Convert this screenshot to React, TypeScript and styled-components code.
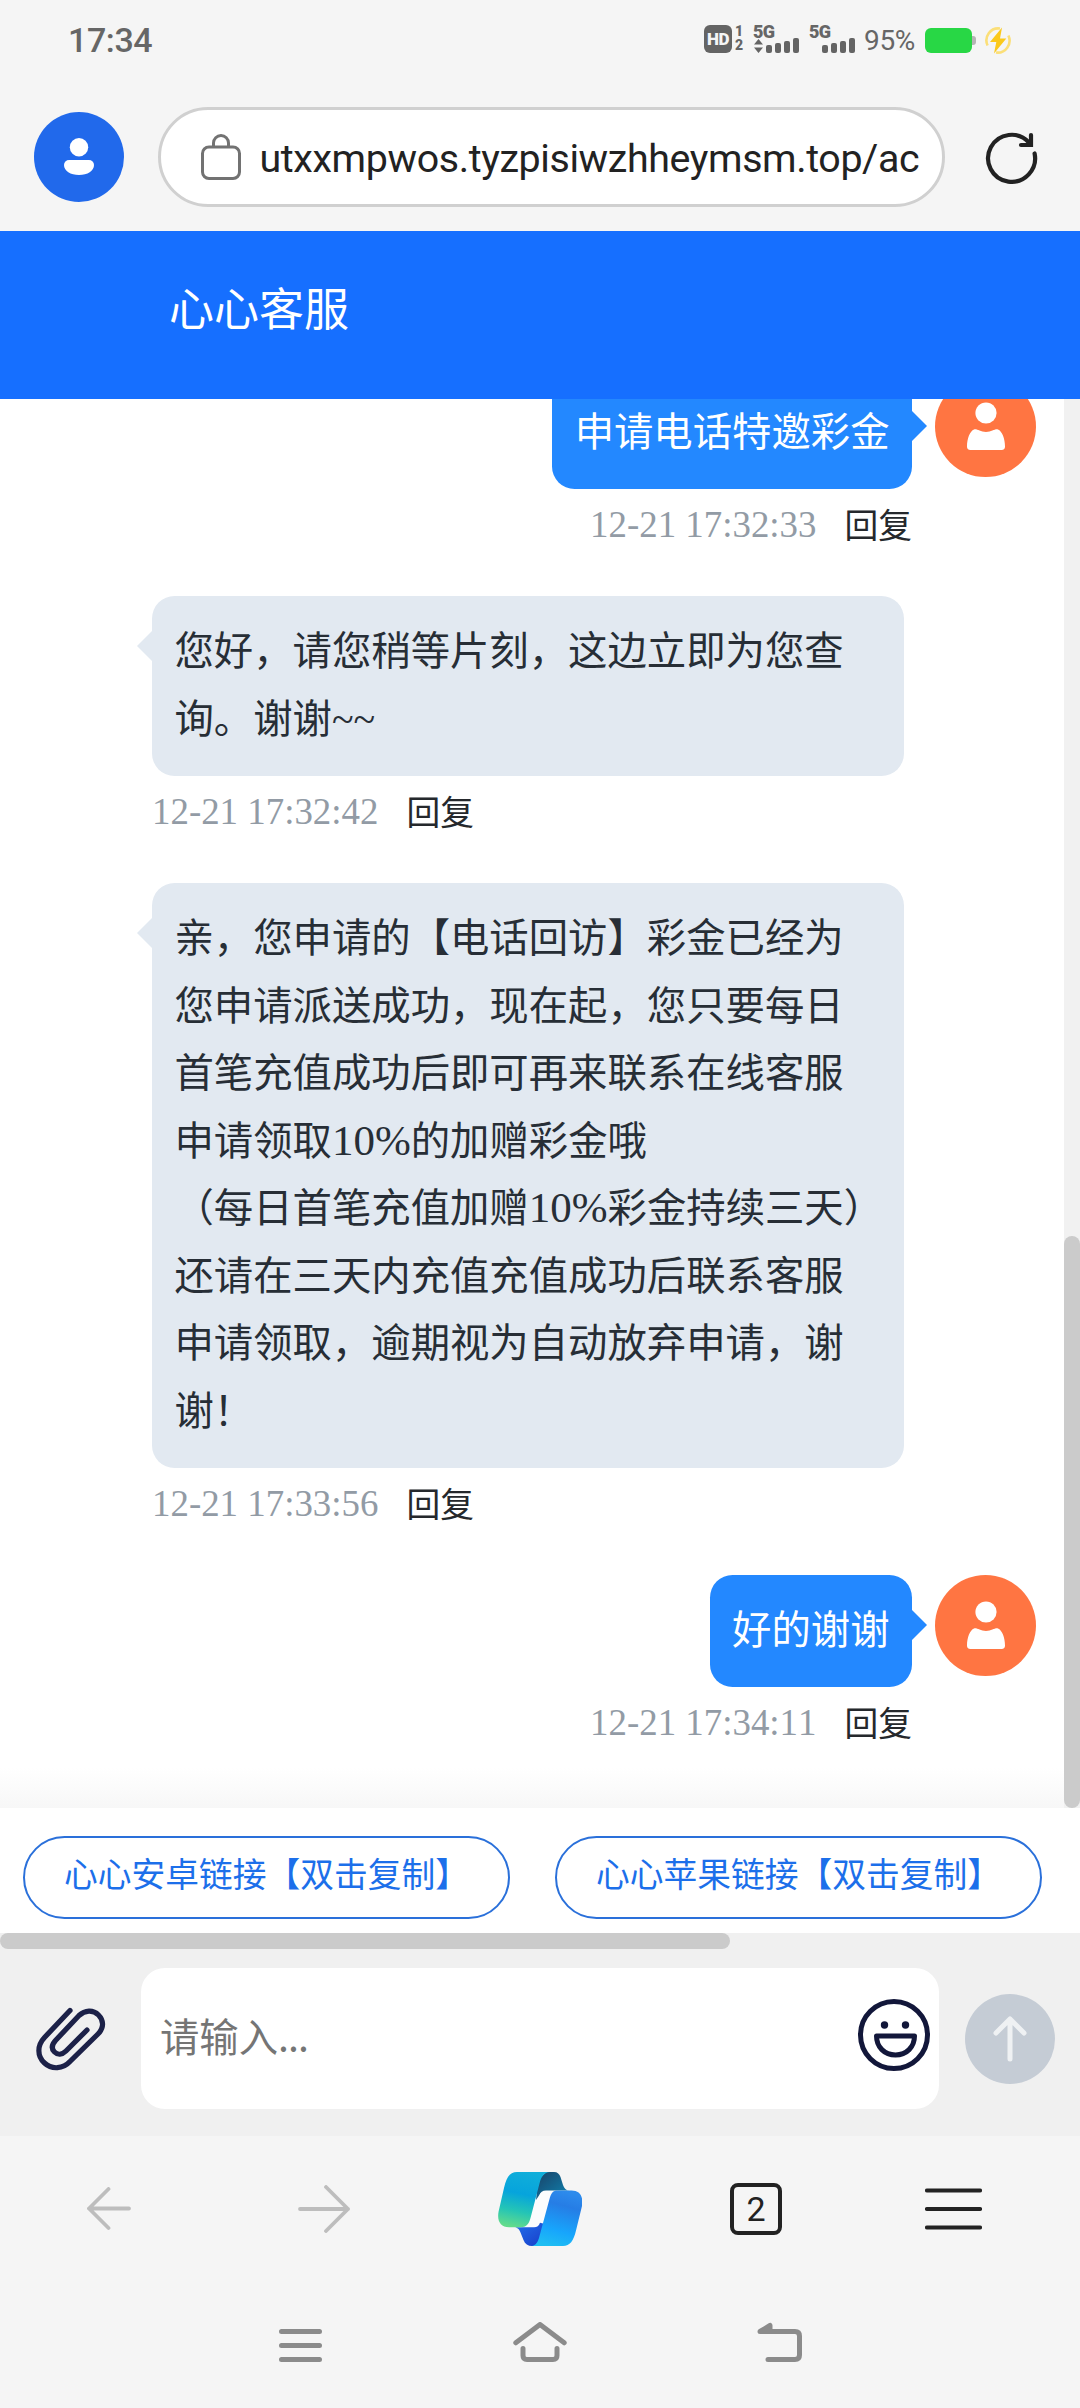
import React from "react";
import styled, { createGlobalStyle, css } from "styled-components";

const CJK = `"Noto Sans CJK SC", "Noto Sans", sans-serif`;
const SERIF = `"Liberation Serif", "Noto Sans CJK SC", serif`;

const GlobalStyle = createGlobalStyle`
  *, *::before, *::after { box-sizing: border-box; }
  body { margin: 0; background: #f5f5f5; }
  svg { display: block; flex: none; }
`;

const Screen = styled.div`
  display: flex;
  flex-direction: column;
  width: 1080px;
  height: 2408px;
  overflow: hidden;
  background: #f5f5f5;
  font-family: ${CJK};
`;

/* ---------- status bar ---------- */

const StatusBar = styled.header`
  display: flex;
  justify-content: space-between;
  height: 80px;
  padding: 25px 68px 0 68px;
  font-family: Roboto, sans-serif;
  color: #666;
`;

const Clock = styled.time`
  font-size: 34px;
  line-height: 31px;
  font-weight: 500;
  letter-spacing: -0.4px;
`;

const StatusIcons = styled.div`
  display: flex;
  height: 28px;
`;

const HdBadge = styled.div`
  width: 28px;
  height: 28px;
  border-radius: 6px;
  background: #646464;
  color: #f5f5f5;
  font-size: 17px;
  font-weight: 900;
  line-height: 29px;
  text-align: center;
  letter-spacing: -0.5px;
`;

const SimNumbers = styled.div`
  display: flex;
  flex-direction: column;
  width: 12px;
  margin-right: 9px;
  padding-left: 3px;
  font-size: 14px;
  font-weight: 900;
`;

const SimNumber = styled.span`
  height: 15px;
  line-height: 13px;
`;

const Signal = styled.div`
  display: flex;
  flex-direction: column;
  width: 46px;
  margin-right: 10px;
`;

const SignalLabel = styled.span`
  height: 13px;
  font-size: 18px;
  line-height: 14px;
  font-weight: 900;
  letter-spacing: -0.8px;
`;

const SignalBottom = styled.div`
  display: flex;
  justify-content: space-between;
  align-items: flex-end;
  height: 15px;
  padding-left: 1px;
`;

const Bars = styled.div`
  display: flex;
  align-items: flex-end;
  gap: 3px;
  margin-left: auto;
`;

const Bar = styled.i<{ $h: number }>`
  width: 6px;
  height: ${(p) => p.$h}px;
  border-radius: 2px;
  background: #646464;
`;

const Percent = styled.span`
  width: 61px;
  margin-left: -1px;
  font-size: 28px;
  line-height: 31px;
  letter-spacing: -0.3px;
`;

const Battery = styled.div`
  display: flex;
  align-items: center;
  height: 25px;
  margin: 3px 8px 0 0;
`;

const BatteryBody = styled.div`
  width: 47px;
  height: 25px;
  border-radius: 6px;
  background: #28d745;
`;

const BatteryTip = styled.div`
  width: 4px;
  height: 9px;
  border-radius: 0 3px 3px 0;
  background: #b5b5b5;
`;

/* ---------- address bar ---------- */

const AddressRow = styled.div`
  display: flex;
  align-items: center;
  justify-content: space-between;
  height: 151px;
  padding: 3px 42px 0 34px;
`;

const Profile = styled.div`
  display: grid;
  flex: none;
  place-items: center;
  width: 90px;
  height: 90px;
  border-radius: 50%;
  background: #2169eb;
`;

const UrlBox = styled.div`
  display: flex;
  flex: none;
  align-items: center;
  width: 787px;
  height: 100px;
  margin-right: 7px;
  padding: 0 19px 0 40px;
  border: 3px solid #d0d0d0;
  border-radius: 50px;
  background: #fff;
`;

const UrlText = styled.div`
  flex: 1;
  margin-left: 19px;
  padding-top: 3px;
  overflow: hidden;
  white-space: nowrap;
  font-family: Roboto, sans-serif;
  font-size: 39.375px;
  line-height: 60px;
  letter-spacing: -0.38px;
  color: #222;
`;

/* ---------- chat ---------- */

const ChatHeader = styled.div`
  height: 168px;
  padding: 42px 0 0 169px;
  background: #166fff;
  color: #fff;
  font-size: 45px;
  line-height: 67px;
`;

const ChatArea = styled.main`
  display: flex;
  height: 1409px;
  background: #fff;
  overflow: hidden;
`;

const Messages = styled.div`
  display: flex;
  flex: 1;
  flex-direction: column;
  justify-content: flex-end;
  padding: 0 28px 14px 152px;
  background: linear-gradient(to top, #f7f7f7, #fff 40px);
`;

const ScrollTrack = styled.div`
  display: flex;
  flex-direction: column;
  justify-content: flex-end;
  width: 16px;
  background: #f1f1f1;
`;

const ScrollThumb = styled.div`
  height: 572px;
  border-radius: 8px;
  background: #cbcbcb;
`;

const Message = styled.article<{ $mine?: boolean }>`
  display: flex;
  justify-content: ${(p) => (p.$mine ? "flex-end" : "flex-start")};
  flex: none;
`;

const MessageBody = styled.div<{ $mine?: boolean }>`
  display: flex;
  flex-direction: column;
  align-items: ${(p) => (p.$mine ? "flex-end" : "flex-start")};
`;

const Bubble = styled.div<{ $mine?: boolean }>`
  position: relative;
  width: ${(p) => (p.$mine ? "auto" : "752px")};
  padding: 18.5px 22.5px 26.5px;
  border-radius: 22.5px;
  background: ${(p) => (p.$mine ? "#2388ff" : "#e2e9f1")};
  color: ${(p) => (p.$mine ? "#fff" : "#272e36")};
  font-size: 39.375px;
  line-height: 67.5px;

  &::after {
    content: "";
    position: absolute;
    top: 35px;
    border: 15px solid transparent;
    ${(p) =>
      p.$mine
        ? css`
            left: 100%;
            border-right-width: 0;
            border-left-color: #2388ff;
          `
        : css`
            right: 100%;
            border-left-width: 0;
            border-right-color: #e2e9f1;
          `}
  }
`;

const Line = styled.div`
  height: 67.5px;
  white-space: nowrap;
`;

const Latin = styled.span<{ $size: number }>`
  font-family: ${SERIF};
  font-size: ${(p) => p.$size}px;
  line-height: 1;
`;

const Meta = styled.div`
  display: flex;
  align-items: center;
  gap: 28px;
  height: 70px;
  margin-bottom: 37px;
`;

const Stamp = styled.time`
  padding-top: 2px;
  font-family: ${SERIF};
  font-size: 36.9px;
  font-kerning: none;
  line-height: 48px;
  color: #929ba5;
`;

const Reply = styled.span`
  font-size: 33.75px;
  line-height: 48px;
  color: #25282c;
`;

const Avatar = styled.div`
  display: grid;
  place-items: center;
  width: 101px;
  height: 101px;
  margin-left: 23px;
  border-radius: 50%;
  background: #ff7542;
`;

/* ---------- quick links and composer ---------- */

const QuickLinks = styled.div`
  display: flex;
  gap: 45px;
  height: 125px;
  padding: 28px 23px 0;
  background: #fff;
`;

const Pill = styled.div`
  flex: none;
  width: 487px;
  height: 83px;
  padding-left: 39px;
  border: 2px solid #2a70da;
  border-radius: 42px;
  color: #1c6fea;
  font-size: 33.75px;
  line-height: 70px;
  white-space: nowrap;
`;

const HScroll = styled.div`
  height: 16px;
  background: #f0f0f0;
`;

const HThumb = styled.div`
  width: 730px;
  height: 16px;
  border-radius: 8px;
  background: #cbcbcb;
`;

const Composer = styled.div`
  display: flex;
  align-items: center;
  height: 187px;
  padding: 0 25px 8px 36px;
  background: #f0f0f0;
`;

const InputBox = styled.div`
  display: flex;
  align-items: center;
  justify-content: space-between;
  width: 798px;
  height: 141px;
  margin: 0 26px 0 35px;
  padding: 0 9px 7px 19px;
  border-radius: 24px;
  background: #fff;
`;

const Placeholder = styled.span`
  padding-bottom: 2px;
  color: #757575;
  font-size: 39.375px;
`;

const Dots = styled.span`
  letter-spacing: -1px;
`;

const Send = styled.div`
  display: grid;
  place-items: center;
  width: 90px;
  height: 90px;
  border-radius: 50%;
  background: #c5ccd5;
`;

/* ---------- bottom navigation ---------- */

const BrowserNav = styled.nav`
  display: flex;
  align-items: center;
  height: 146px;
  padding-left: 87px;
`;

const NavSlot = styled.div<{ $w: number; $after: number }>`
  width: ${(p) => p.$w}px;
  margin-right: ${(p) => p.$after}px;
`;

const Tabs = styled.div`
  display: grid;
  place-items: center;
  width: 52px;
  height: 52px;
  margin-right: 143px;
  border: 4px solid #222;
  border-radius: 8px;
  color: #222;
  font-family: Roboto, sans-serif;
  font-size: 34px;
  line-height: 44px;
`;

const SystemNav = styled.nav`
  display: flex;
  align-items: flex-end;
  height: 126px;
  padding: 0 277px 46px 279px;
  justify-content: space-between;
`;

/* ---------- icons ---------- */

const BoltIcon = () => (
  <svg width="28" height="30" viewBox="0 -1 28 29">
    <path d="M3.6 19A12 12 0 0 1 16 2" fill="none" stroke="#fbdf78" strokeWidth="2.6" />
    <path d="M24.4 9A12 12 0 0 1 12 26" fill="none" stroke="#fbdf78" strokeWidth="2.6" />
    <path d="M18 1 6 15.500h6.300L10 27l12.300-15H16z" fill="#fbc91c" />
  </svg>
);

const ProfileIcon = () => (
  <svg width="30" height="38" viewBox="0 0 30 38">
    <circle cx="15" cy="9.200" r="9.200" fill="#fff" />
    <path d="M5 22h20a5 5 0 0 1 5 5c0 6-6.500 10-15 10S0 33 0 27a5 5 0 0 1 5-5z" fill="#fff" />
  </svg>
);

const LockIcon = () => (
  <svg width="40" height="46" viewBox="0 0 40 46" fill="none" stroke="#727272" strokeWidth="3">
    <rect x="1.500" y="13" width="37" height="31.500" rx="6.500" />
    <path d="M12.500 12V9a7.500 7.500 0 0 1 15 0v3" />
  </svg>
);

const ReloadIcon = () => (
  <svg width="53" height="53" viewBox="0 0 53 53" fill="none" stroke="#222" strokeWidth="4.200" strokeLinecap="round">
    <path d="M49.600 22.500A23.500 23.500 0 1 1 44 11.500" />
    <path d="M46 4v10H36" />
  </svg>
);

const PersonIcon = () => (
  <svg width="40" height="49" viewBox="0 0 40 49" fill="#fff">
    <circle cx="20" cy="11" r="10.600" />
    <path d="M8 27.500C11 26.500 14 30 20 30s9-3.500 12-2.500c4 1.500 7 9 7 17 0 2.300-1 3.500-3.500 3.500h-31C2 48 1 46.800 1 44.500c0-8 3-15.500 7-17z" />
  </svg>
);

const ClipIcon = () => (
  <svg width="70" height="64" viewBox="0 0 70 64" fill="none" stroke="#1c2148" strokeWidth="5.200" strokeLinecap="round">
    <path d="M34 3.500 8.500 30.500C1 38.500 1 49 8.500 56S27 62 34 54.500L62 27c6-6 6-13.500.5-19S49 3 43 8.500L19.500 33.500c-4 4.500-4 8.500-1 11.500s7.500 3 11.500-1l21-21" />
  </svg>
);

const SmileIcon = () => (
  <svg width="72" height="72" viewBox="0 0 72 72" fill="none" stroke="#12173a" strokeWidth="5" strokeLinejoin="round">
    <circle cx="36" cy="36" r="33.500" />
    <path d="M18.500 37h38C56.500 48 48.500 56 37.500 56s-19-8-19-19z" />
    <circle cx="26.500" cy="26" r="3.700" fill="#12173a" stroke="none" />
    <circle cx="47.500" cy="26" r="3.700" fill="#12173a" stroke="none" />
  </svg>
);

const SendIcon = () => (
  <svg width="36" height="48" viewBox="0 0 36 48" fill="none" stroke="#eff1f3" strokeWidth="5" strokeLinecap="round" strokeLinejoin="round">
    <path d="M18 44V4M4 18 18 4l14 14" />
  </svg>
);

const BackIcon = () => (
  <svg width="44" height="44" viewBox="0 0 44 44" fill="none" stroke="#bdbdbd" strokeWidth="3.800" strokeLinecap="round" strokeLinejoin="round">
    <path d="M42 21.500H2M21.500 2 2 21.500 21.500 41" />
  </svg>
);

const ForwardIcon = () => (
  <svg width="52" height="48" viewBox="0 0 52 48" fill="none" stroke="#bdbdbd" strokeWidth="3.800" strokeLinecap="round" strokeLinejoin="round">
    <path d="M2 24h48M28 2l22 22-22 22" />
  </svg>
);

const CopilotIcon = () => (
  <svg width="84" height="74" viewBox="0 0 84 74">
    <defs>
      <linearGradient id="leaf" x1="0.55" y1="0" x2="0.35" y2="1">
        <stop offset="0" stopColor="#10aeda" />
        <stop offset="0.4" stopColor="#06a4dc" />
        <stop offset="0.72" stopColor="#25c5b5" />
        <stop offset="1" stopColor="#62db8c" />
      </linearGradient>
      <linearGradient id="wave" x1="0.6" y1="0" x2="0.35" y2="1">
        <stop offset="0" stopColor="#2d8bec" />
        <stop offset="0.25" stopColor="#267de5" />
        <stop offset="0.7" stopColor="#17a5fc" />
        <stop offset="1" stopColor="#1fbef2" />
      </linearGradient>
      <linearGradient id="foldTop" x1="0.2" y1="0.2" x2="1" y2="1">
        <stop offset="0" stopColor="#174f76" />
        <stop offset="1" stopColor="#0e86b4" />
      </linearGradient>
      <linearGradient id="foldBottom" x1="0" y1="0" x2="1" y2="1">
        <stop offset="0" stopColor="#2271ec" />
        <stop offset="1" stopColor="#183cc8" />
      </linearGradient>
    </defs>
    <path d="M40 18.500h22L46 55.200H22z" fill="#fbfcfd" />
    <path d="M48 0h8c3.500 0 5.500 2 6.500 5l2.500 8c1.200 3.500 3 5.500 6.500 5.500H48c-3.500 0-5.500 1.500-7 5L38 28 40 8z" fill="url(#foldTop)" />
    <path d="M16 55.200h20c3 0 5-1.500 6-4.500L47 52l-6 22h-7c-4 0-7-2-8.500-6L22.500 60.500c-1-3-3-5.300-6.500-5.300z" fill="url(#foldBottom)" />
    <path d="M19 0h33c-6 .5-8.500 4-10.500 11.500L32.500 46c-1.700 6.500-4.500 9.200-9.500 9.200H11C2.500 55.200-1.200 49 .6 39.500L6 16C8.500 5 12 0 19 0z" fill="url(#leaf)" />
    <path d="M65 74H33.500c4.500-.5 6.500-4 8-10l10-37c1.600-6 3.500-8.500 8-8.500h14c8.500 0 12 6 10.500 15.500L78 58.500C75.500 69 72 74 65 74z" fill="url(#wave)" />
  </svg>
);

const MenuIcon = () => (
  <svg width="57" height="42" viewBox="0 0 57 42" stroke="#222" strokeWidth="4.200" strokeLinecap="round">
    <path d="M2 2.500h53M2 21h53M2 39.500h53" />
  </svg>
);

const RecentsIcon = () => (
  <svg width="43" height="33" viewBox="0 0 43 33" stroke="#8b8b8b" strokeWidth="5" strokeLinecap="round">
    <path d="M2.500 2.500h38M2.500 16.500h38M2.500 30.500h38" />
  </svg>
);

const HomeIcon = () => (
  <svg width="54" height="40" viewBox="0 0 54 40" fill="none" stroke="#8b8b8b" strokeWidth="5" strokeLinecap="round" strokeLinejoin="round">
    <path d="M2.800 20.800 27 2.500l24.200 18.300" />
    <path d="M10 26.500v7q0 4 4 4h26q4 0 4-4v-7" />
  </svg>
);

const SystemBackIcon = () => (
  <svg width="46" height="40" viewBox="0 0 46 40" fill="none" stroke="#8b8b8b" strokeWidth="5" strokeLinecap="round" strokeLinejoin="round">
    <path d="M11 37.500h27q4.500 0 4.500-4.500V14q0-4.500-4.500-4.500H3l10-6v5" />
  </svg>
);

const DataArrows = () => (
  <svg width="9" height="14" viewBox="0 0 9 14" fill="#646464">
    <path d="M4.500 0 9 5.500H0zM4.500 14 9 8.500H0z" />
  </svg>
);

const SignalMeter = ({ active }: { active?: boolean }) => (
  <Signal>
    <SignalLabel>5G</SignalLabel>
    <SignalBottom>
      {active && <DataArrows />}
      <Bars>
        {[8, 10, 12, 15].map((h) => (
          <Bar key={h} $h={h} />
        ))}
      </Bars>
    </SignalBottom>
  </Signal>
);

/* ---------- content ---------- */

type ChatMessage = { lines: string[]; time: string; mine?: boolean };

const messages: ChatMessage[] = [
  { mine: true, lines: ["申请电话特邀彩金"], time: "12-21 17:32:33" },
  { lines: ["您好，请您稍等片刻，这边立即为您查", "询。谢谢~~"], time: "12-21 17:32:42" },
  {
    lines: [
      "亲，您申请的【电话回访】彩金已经为",
      "您申请派送成功，现在起，您只要每日",
      "首笔充值成功后即可再来联系在线客服",
      "申请领取10%的加赠彩金哦",
      "（每日首笔充值加赠10%彩金持续三天）",
      "还请在三天内充值充值成功后联系客服",
      "申请领取，逾期视为自动放弃申请，谢",
      "谢！",
    ],
    time: "12-21 17:33:56",
  },
  { mine: true, lines: ["好的谢谢"], time: "12-21 17:34:11" },
];

const withLatin = (text: string) =>
  text.split(/([0-9%~]+)/).map((part, i) =>
    i % 2 ? (
      <Latin key={i} $size={part.startsWith("~") ? 40 : 43}>
        {part}
      </Latin>
    ) : (
      part
    )
  );

export default function App() {
  return (
    <Screen>
      <GlobalStyle />
      <StatusBar>
        <Clock>17:34</Clock>
        <StatusIcons>
          <HdBadge>HD</HdBadge>
          <SimNumbers>
            <SimNumber>1</SimNumber>
            <SimNumber>2</SimNumber>
          </SimNumbers>
          <SignalMeter active />
          <SignalMeter />
          <Percent>95%</Percent>
          <Battery>
            <BatteryBody />
            <BatteryTip />
          </Battery>
          <BoltIcon />
        </StatusIcons>
      </StatusBar>

      <AddressRow>
        <Profile>
          <ProfileIcon />
        </Profile>
        <UrlBox>
          <LockIcon />
          <UrlText>utxxmpwos.tyzpisiwzhheymsm.top/ac</UrlText>
        </UrlBox>
        <ReloadIcon />
      </AddressRow>

      <ChatHeader>心心客服</ChatHeader>

      <ChatArea>
        <Messages>
          {messages.map((m) => (
            <Message key={m.time} $mine={m.mine}>
              <MessageBody $mine={m.mine}>
                <Bubble $mine={m.mine}>
                  {m.lines.map((line) => (
                    <Line key={line}>{withLatin(line)}</Line>
                  ))}
                </Bubble>
                <Meta>
                  <Stamp>{m.time}</Stamp>
                  <Reply>回复</Reply>
                </Meta>
              </MessageBody>
              {m.mine && (
                <Avatar>
                  <PersonIcon />
                </Avatar>
              )}
            </Message>
          ))}
        </Messages>
        <ScrollTrack>
          <ScrollThumb />
        </ScrollTrack>
      </ChatArea>

      <QuickLinks>
        <Pill>心心安卓链接【双击复制】</Pill>
        <Pill>心心苹果链接【双击复制】</Pill>
      </QuickLinks>
      <HScroll>
        <HThumb />
      </HScroll>

      <Composer>
        <ClipIcon />
        <InputBox>
          <Placeholder>
            请输入<Dots>...</Dots>
          </Placeholder>
          <SmileIcon />
        </InputBox>
        <Send>
          <SendIcon />
        </Send>
      </Composer>

      <BrowserNav>
        <NavSlot $w={44} $after={167}>
          <BackIcon />
        </NavSlot>
        <NavSlot $w={52} $after={148}>
          <ForwardIcon />
        </NavSlot>
        <NavSlot $w={84} $after={148}>
          <CopilotIcon />
        </NavSlot>
        <Tabs>2</Tabs>
        <MenuIcon />
      </BrowserNav>

      <SystemNav>
        <RecentsIcon />
        <HomeIcon />
        <SystemBackIcon />
      </SystemNav>
    </Screen>
  );
}
